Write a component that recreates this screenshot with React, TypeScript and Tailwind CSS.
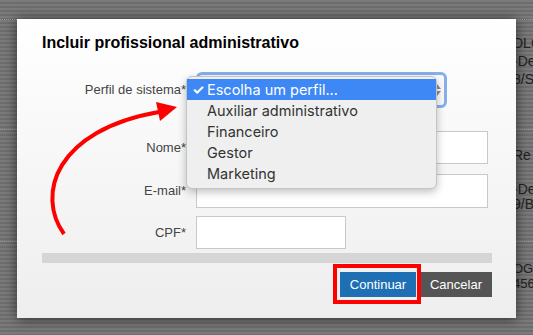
const menuItems = ['Auxiliar administrativo', 'Financeiro', 'Gestor', 'Marketing']

const App = () => {
  return (
    <div className="relative h-[335px] w-[533px] overflow-hidden bg-[repeating-linear-gradient(to_bottom,#7b7b7b_0px,#7b7b7b_2px,#6d6d6d_2px,#6d6d6d_4px)] font-['Liberation_Sans',Arial,sans-serif] text-[14px] text-[#222]">
      {/* page behind the overlay */}
      <div className="pt-[19px]">
        <div className="h-[110px] border-t border-dotted border-[#9a9a9a] pl-[513px] pt-[14px] leading-[18px] whitespace-nowrap">
          <p>DLC</p>
          <p>-De</p>
          <p>8/S</p>
        </div>
        <div className="h-[112px] border-t border-dotted border-[#9a9a9a] pl-[513px] pt-[18px] leading-[15px] whitespace-nowrap">
          <p>Re</p>
          <p className="mt-[19px]">-De</p>
          <p>9/B.</p>
        </div>
        <div className="border-t border-dotted border-[#9a9a9a] pl-[513px] pt-[19px] text-[13px] leading-[15px] whitespace-nowrap">
          <p>OGI</p>
          <p>456</p>
        </div>
      </div>

      {/* modal */}
      <div className="absolute left-[17px] top-[19px] h-[299px] w-[499px] bg-gradient-to-b from-white to-[#eeeeee] pl-[25px] pr-[24px] pt-[14px] shadow-[0_1px_12px_rgba(0,0,0,0.6)]">
        <h2 className="text-[16px] font-bold leading-[20px] text-black">Incluir profissional administrativo</h2>

        <div className="mt-[19px] text-[13px] text-[#444]">
          <div className="flex items-center gap-[10px]">
            <label className="w-[144px] text-right">Perfil de sistema*</label>
            <div className="relative h-[36px] w-[251px] rounded-[6px] border-[3px] border-[#86b0ea] bg-[#fafafa]">
              <div className="absolute right-[3px] top-[9px] flex flex-col items-center gap-[2px]">
                <span className="h-0 w-0 border-x-[4px] border-b-[5px] border-x-transparent border-b-[#8a8a8a]" />
                <span className="h-0 w-0 border-x-[4px] border-t-[5px] border-x-transparent border-t-[#8a8a8a]" />
              </div>
            </div>
          </div>

          <div className="mt-[23px] flex items-center gap-[10px]">
            <label className="w-[144px] text-right">Nome*</label>
            <input className="h-[33px] w-[292px] border border-[#c8c8c8] bg-white" />
          </div>

          <div className="mt-[10px] flex items-center gap-[10px]">
            <label className="w-[144px] text-right">E-mail*</label>
            <input className="h-[34px] w-[292px] border border-[#c8c8c8] bg-white" />
          </div>

          <div className="mt-[8px] flex items-center gap-[10px]">
            <label className="w-[144px] text-right">CPF*</label>
            <input className="h-[33px] w-[150px] border border-[#c8c8c8] bg-white" />
          </div>
        </div>

        <div className="mt-[4px] h-[10px] w-[450px] bg-[#d5d5d5]" />

        <div className="mt-[9px] flex w-[450px] justify-end gap-[4px] text-[13px] text-white">
          <div className="relative">
            <button className="h-[25px] w-[76px] bg-[#1f6fb4]">Continuar</button>
            <div className="absolute -bottom-[7px] -left-[7px] -right-[5px] -top-[8px] border-[4px] border-[#ff0000]" />
          </div>
          <button className="h-[25px] w-[72px] bg-[#555555]">Cancelar</button>
        </div>

        {/* open select menu */}
        <div className="absolute left-[169px] top-[57px] w-[251px] rounded-[6px] border border-[#c4c4c4] bg-[#efefef] pb-[4px] pt-[2px] font-['Inter',sans-serif] text-[14.5px] text-[#333] shadow-[0_3px_8px_rgba(0,0,0,0.25)]">
          <div className="flex h-[21px] items-center bg-[#3d88f5] text-white">
            <span className="w-[20px] pl-[5px] text-[14px] font-bold">✓</span>
            <span>Escolha um perfil...</span>
          </div>
          {menuItems.map((item) => (
            <div key={item} className="flex h-[21px] items-center pl-[20px]">
              {item}
            </div>
          ))}
        </div>
      </div>

      {/* annotation arrow */}
      <svg className="pointer-events-none absolute left-0 top-0" width="533" height="335" viewBox="0 0 533 335">
        <path d="M64 234 C 36 195, 55 130, 159 112" fill="none" stroke="#ff0000" strokeWidth="4" />
        <polygon points="156,102 177,107 160,121" fill="#ff0000" />
      </svg>
    </div>
  )
}

export default App
